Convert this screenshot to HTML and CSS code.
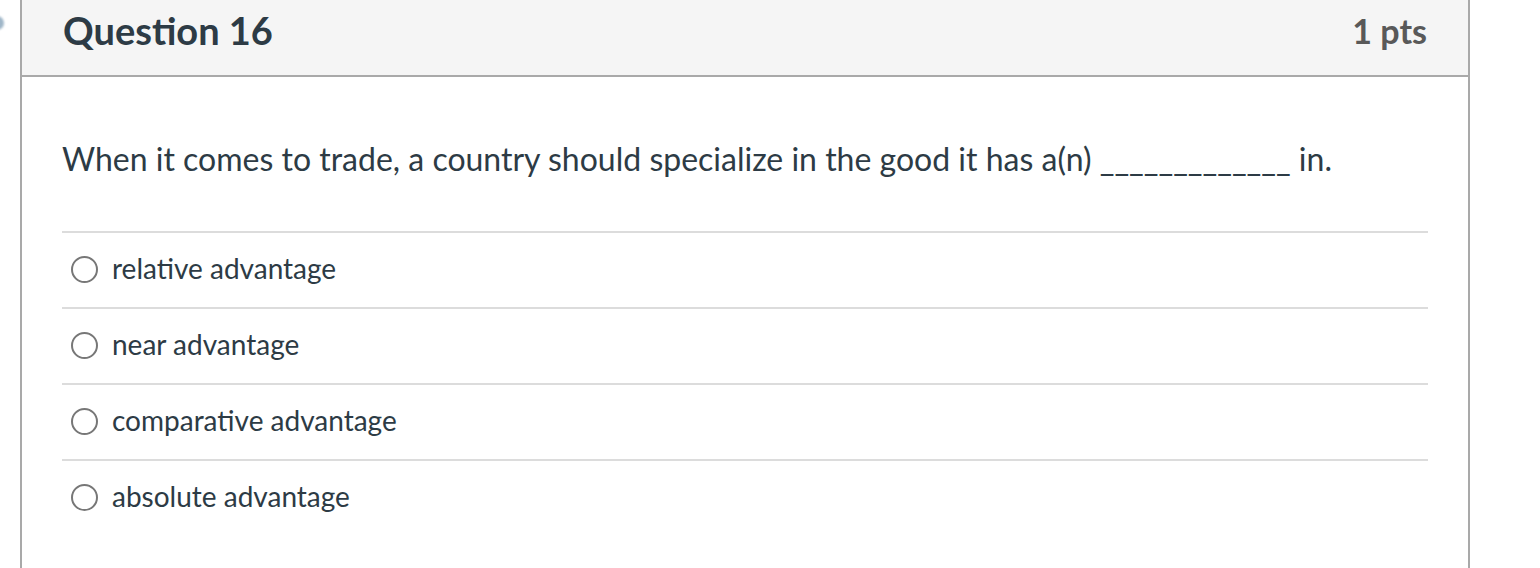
FILE: index.html
```html
<!DOCTYPE html>
<html lang="en">
<head>
<meta charset="utf-8">
<title>Question 16</title>
<link rel="stylesheet" href="styles.css">
</head>
<body>
<div class="edge-dot"></div>
<div class="question">
  <div class="header">
    <span class="title">Question 16</span>
    <span class="points">1 pts</span>
  </div>
  <div class="content">
    <p class="text">When it comes to trade, a country should specialize in the good it has a(n) _____________ in.</p>
    <ul class="answers">
      <li class="answer"><span class="radio"></span><span class="label">relative advantage</span></li>
      <li class="answer"><span class="radio"></span><span class="label">near advantage</span></li>
      <li class="answer"><span class="radio"></span><span class="label">comparative advantage</span></li>
      <li class="answer"><span class="radio"></span><span class="label">absolute advantage</span></li>
    </ul>
  </div>
</div>
</body>
</html>
```
FILE: styles.css
```css
html, body {
  margin: 0;
  padding: 0;
  background: #ffffff;
  height: 568px;
  overflow: hidden;
}
body {
  font-family: Lato, "Open Sans", sans-serif;
  color: #2d3b45;
  position: relative;
}
.edge-dot {
  position: absolute;
  left: -10px;
  top: 16px;
  width: 14px;
  height: 14px;
  border-radius: 50%;
  background: #9fb6c8;
  filter: blur(1px);
}
.question {
  margin-left: 20px;
  width: 1450px;
  box-sizing: border-box;
  border-left: 2px solid #a9a9a9;
  border-right: 2px solid #a9a9a9;
  height: 568px;
}
.header {
  background: #f5f5f5;
  height: 75px;
  border-bottom: 2px solid #a9a9a9;
  display: flex;
  align-items: flex-start;
  justify-content: space-between;
  padding: 0 41px;
  box-sizing: content-box;
}
.title {
  font-weight: 700;
  font-size: 38px;
  line-height: 1.2;
  color: #2d3b45;
  padding-top: 8px;
}
.points {
  font-weight: 700;
  font-size: 34px;
  line-height: 1.2;
  color: #595959;
  padding-top: 11px;
}
.content {
  padding: 0 40px;
}
.text {
  margin: 0;
  padding-top: 64px;
  font-size: 32px;
  line-height: 36px;
  padding-bottom: 54px;
}
.answers {
  list-style: none;
  margin: 0;
  padding: 0;
}
.answer {
  border-top: 2px solid #dcdcdc;
  height: 74px;
  display: flex;
  align-items: center;
  padding-left: 9px;
}
.radio {
  width: 23px;
  height: 23px;
  border: 2px solid #777777;
  border-radius: 50%;
  box-sizing: content-box;
  margin-right: 14px;
  margin-bottom: 2px;
}
.label {
  font-size: 28px;
  line-height: 34px;
  margin-bottom: 4px;
}
```
